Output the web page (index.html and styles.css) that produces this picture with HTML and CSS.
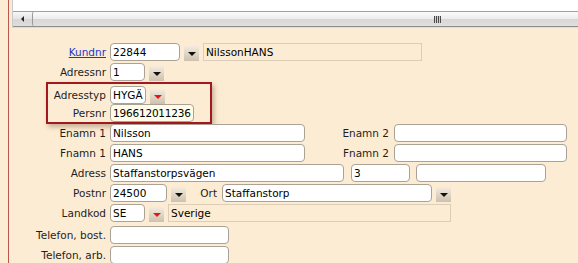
FILE: index.html
```html
<!DOCTYPE html>
<html lang="sv">
<head>
    <meta charset="UTF-8">
    <title>Kund - adress</title>
    <link rel="stylesheet" href="styles.css">
</head>
<body>
    <div class="page">
        <div class="viewport">
            <div class="pane"></div>
            <div class="hscroll">
                <div class="hscroll-btn"><span class="arrow-left"></span></div>
                <div class="hscroll-thumb"><span class="grip"></span></div>
            </div>
        </div>

        <form class="form">
            <div class="row">
                <label class="lbl"><a href="#">Kundnr</a></label>
                <input class="field w70" value="22844">
                <span class="drop"></span>
                <span class="ro w219">NilssonHANS</span>
            </div>
            <div class="row">
                <label class="lbl">Adressnr</label>
                <input class="field w35" value="1">
                <span class="drop"></span>
            </div>

            <div class="group">
                <div class="row">
                    <label class="lbl">Adresstyp</label>
                    <input class="field w36" value="HYGÄ">
                    <span class="drop red"></span>
                </div>
                <div class="row">
                    <label class="lbl">Persnr</label>
                    <input class="field w84 pers" value="196612011236">
                </div>
            </div>

            <div class="row">
                <label class="lbl">Enamn 1</label>
                <input class="field w195" value="Nilsson">
                <label class="lbl2">Enamn 2</label>
                <input class="field w173" value="">
            </div>
            <div class="row">
                <label class="lbl">Fnamn 1</label>
                <input class="field w195" value="HANS">
                <label class="lbl2">Fnamn 2</label>
                <input class="field w173" value="">
            </div>
            <div class="row">
                <label class="lbl">Adress</label>
                <input class="field w234" value="Staffanstorpsvägen">
                <input class="field w59 ml7" value="3">
                <input class="field w130 ml6" value="">
            </div>
            <div class="row">
                <label class="lbl">Postnr</label>
                <input class="field w57" value="24500">
                <span class="drop"></span>
                <label class="lbl-ort">Ort</label>
                <input class="field w210" value="Staffanstorp">
                <span class="drop"></span>
            </div>
            <div class="row">
                <label class="lbl">Landkod</label>
                <input class="field w35" value="SE">
                <span class="drop red"></span>
                <span class="ro w283">Sverige</span>
            </div>
            <div class="row gap">
                <label class="lbl">Telefon, bost.</label>
                <input class="field w119" value="">
            </div>
            <div class="row">
                <label class="lbl">Telefon, arb.</label>
                <input class="field w119" value="">
            </div>
        </form>
    </div>
</body>
</html>
```

FILE: styles.css
```css
* {
    box-sizing: border-box;
}

body {
    margin: 0;
    background: #fdecd4;
    color: #1e1e1e;
    font-family: Tahoma, "DejaVu Sans", sans-serif;
    font-size: 10.5px;
    overflow: hidden;
}

.page {
    margin-left: 8px;
    height: 263px;
    border-left: 1px solid #b8574c;
}

/* top window edge with horizontal scrollbar */
.viewport {
    margin-left: 3px;
    border-left: 1px solid #c9c9c9;
    border-bottom: 1px solid #e6dccb;
}

.pane {
    height: 11px;
    background: #fff;
}

.hscroll {
    display: flex;
    height: 16px;
    border-top: 1px solid #a0a0a0;
    border-bottom: 1px solid #8e8e8e;
    background: #e0e0e0;
    overflow: hidden;
}

.hscroll-btn {
    flex: none;
    width: 19px;
    display: flex;
    align-items: center;
    justify-content: center;
    background: linear-gradient(#f7f7f7, #e4e4e4 50%, #d6d6d6 51%, #dedede);
}

.arrow-left {
    width: 0;
    height: 0;
    border-right: 3px solid #222;
    border-top: 3px solid transparent;
    border-bottom: 3px solid transparent;
}

.hscroll-thumb {
    flex: none;
    width: 820px;
    display: flex;
    align-items: center;
    border-left: 1px solid #9a9a9a;
    border-radius: 2px 0 0 2px;
    background: linear-gradient(#fbfbfb, #ececec 50%, #d7d7d7 51%, #e0e0e0);
}

.grip {
    margin-left: 401px;
    width: 7px;
    height: 7px;
    background: repeating-linear-gradient(90deg, #4a4a4a 0 1px, #cfcfcf 1px 2px);
}

/* form */
.form {
    padding-top: 15px;
}

.row {
    display: flex;
    align-items: flex-start;
    height: 20px;
}

.row.gap {
    margin-top: 2px;
}

.lbl {
    flex: none;
    width: 101px;
    padding-right: 4px;
    text-align: right;
    line-height: 18px;
    white-space: nowrap;
}

.lbl a {
    color: #1c37c8;
    text-decoration: underline;
}

.lbl2 {
    flex: none;
    width: 89px;
    padding-right: 5px;
    text-align: right;
    line-height: 18px;
}

.lbl-ort {
    flex: none;
    width: 36px;
    padding-right: 5px;
    text-align: right;
    line-height: 18px;
}

.field {
    flex: none;
    height: 18px;
    margin: 0;
    padding: 0 2px;
    border: 1px solid #aaa294;
    border-radius: 4px;
    background: #fff;
    color: #000;
    font: inherit;
    outline: none;
}

.field.pers {
    padding-right: 0;
    letter-spacing: -0.2px;
    background: #fffde9;
}

.ro {
    flex: none;
    height: 18px;
    margin-left: 4px;
    padding: 0 2px;
    border: 1px solid #dccdb6;
    line-height: 16px;
    color: #000;
}

.drop {
    flex: none;
    width: 15px;
    height: 15px;
    margin: 3px 0 0 4px;
    display: flex;
    align-items: center;
    justify-content: center;
    background: linear-gradient(#f4ebde, #cdc1ae);
}

.drop::after {
    content: '';
    width: 0;
    height: 0;
    margin-top: 1px;
    border-top: 4px solid #111;
    border-left: 4px solid transparent;
    border-right: 4px solid transparent;
}

.drop.red::after {
    border-top-color: #e3161b;
}

.group {
    width: 166px;
    margin: -1px 0 0 37px;
    padding-top: 2px;
    border: 2px solid #a3181f;
    box-shadow: 2px 3px 5px rgba(90, 60, 30, 0.35);
}

.group .row {
    height: 18px;
}

.group .lbl {
    width: 62px;
}

.w35 { width: 35px; }
.w36 { width: 36px; }
.w57 { width: 57px; }
.w59 { width: 59px; }
.w70 { width: 70px; }
.w84 { width: 84px; }
.w119 { width: 119px; }
.w130 { width: 130px; }
.w173 { width: 173px; }
.w195 { width: 195px; }
.w210 { width: 210px; }
.w219 { width: 219px; }
.w234 { width: 234px; }
.w283 { width: 283px; }

.ml6 { margin-left: 6px; }
.ml7 { margin-left: 7px; }
```
